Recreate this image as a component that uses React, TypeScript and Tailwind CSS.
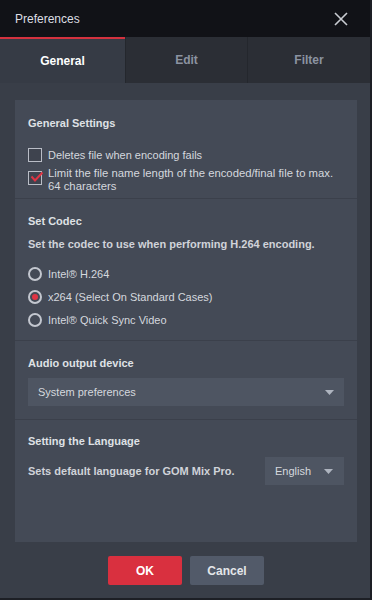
import React from "react";

const font = { fontFamily: '"Liberation Sans", Arial, sans-serif' };

function Checkbox({ checked }: { checked?: boolean }) {
  return (
    <span className="relative inline-block w-[14px] h-[14px] shrink-0 border border-[#b9bdc6] bg-[#3e434e]">
      {checked && (
        <svg className="absolute left-[1px] top-[-1px]" width="14" height="12" viewBox="0 0 14 12">
          <path d="M1.5 5.5 L5 9.5 L12.5 1.5" fill="none" stroke="#e03444" strokeWidth="2" />
        </svg>
      )}
    </span>
  );
}

function Radio({ checked }: { checked?: boolean }) {
  return (
    <span className="flex items-center justify-center w-[14px] h-[14px] shrink-0 rounded-full border-2 border-[#c3c7cf]">
      {checked && <span className="w-[6px] h-[6px] rounded-full bg-[#e03444]" />}
    </span>
  );
}

function Caret() {
  return (
    <svg width="9" height="5" viewBox="0 0 9 5">
      <path d="M0 0 H9 L4.5 5 Z" fill="#aeb4bf" />
    </svg>
  );
}

export default function App() {
  return (
    <div style={font} className="w-[372px] h-[600px] flex flex-col bg-[#393e48] text-[#d5d8de] text-[11px] border-r-2 border-b-2 border-[#1d1f25] overflow-hidden">
      <div className="h-[37px] shrink-0 flex items-center justify-between pl-[15px] pr-[22px] bg-[#111217]">
        <span className="text-[12px] text-[#dcdee3]">Preferences</span>
        <svg width="14" height="14" viewBox="0 0 14 14">
          <path d="M1 1 L13 13 M13 1 L1 13" stroke="#c9ccd2" strokeWidth="1.6" />
        </svg>
      </div>

      <div className="h-[46px] shrink-0 flex">
        <div className="w-[125px] flex items-center justify-center bg-[#363b45] border-t-2 border-[#d4323f] font-bold text-[12px] text-white">
          General
        </div>
        <div className="w-[122px] flex items-center justify-center bg-[#2b2e35] border-l border-[#24272d] font-bold text-[12px] text-[#8b93a1]">
          Edit
        </div>
        <div className="flex-1 flex items-center justify-center bg-[#2b2e35] border-l border-[#24272d] font-bold text-[12px] text-[#8b93a1]">
          Filter
        </div>
      </div>

      <div className="flex-1 flex flex-col pt-[17px] pl-[15px] pr-[13px]">
        <div className="h-[442px] flex flex-col bg-[#444a56]">
          <section className="h-[99px] px-[13px] pt-[15px] border-b border-[#3b404b]">
            <div className="font-bold text-[11px] text-[#dfe1e5] leading-[16px]">General Settings</div>
            <div className="mt-[17px] flex items-center gap-[6px] leading-[14px]">
              <Checkbox />
              <span>Deletes file when encoding fails</span>
            </div>
            <div className="mt-[5px] flex items-start gap-[6px] leading-[13px] text-[11.3px]">
              <span className="mt-[4px]"><Checkbox checked /></span>
              <span>Limit the file name length of the encoded/final file to max.<br />64 characters</span>
            </div>
          </section>

          <section className="h-[142px] px-[13px] pt-[14px] border-b border-[#3b404b]">
            <div className="font-bold text-[11px] text-[#dfe1e5] leading-[16px]">Set Codec</div>
            <div className="mt-[7px] font-bold text-[11px] text-[#d0d3d9] leading-[16px]">Set the codec to use when performing H.264 encoding.</div>
            <div className="mt-[14px] flex items-center gap-[6px] leading-[16px]">
              <Radio />
              <span>Intel® H.264</span>
            </div>
            <div className="mt-[7px] flex items-center gap-[6px] leading-[16px]">
              <Radio checked />
              <span>x264 (Select On Standard Cases)</span>
            </div>
            <div className="mt-[7px] flex items-center gap-[6px] leading-[16px]">
              <Radio />
              <span>Intel® Quick Sync Video</span>
            </div>
          </section>

          <section className="h-[79px] px-[13px] pt-[14px] border-b border-[#3b404b]">
            <div className="font-bold text-[11px] text-[#dfe1e5] leading-[16px]">Audio output device</div>
            <div className="mt-[7px] h-[28px] flex items-center justify-between pl-[10px] pr-[10px] bg-[#4e5562]">
              <span>System preferences</span>
              <Caret />
            </div>
          </section>

          <section className="flex-1 px-[13px] pt-[13px]">
            <div className="font-bold text-[11px] text-[#dfe1e5] leading-[16px]">Setting the Language</div>
            <div className="mt-[8px] flex items-center justify-between">
              <span className="font-bold text-[11px] text-[#d0d3d9]">Sets default language for GOM Mix Pro.</span>
              <div className="w-[79px] h-[28px] flex items-center justify-between pl-[10px] pr-[11px] bg-[#4e5562]">
                <span>English</span>
                <Caret />
              </div>
            </div>
          </section>
        </div>

        <div className="flex justify-center gap-[8px] mt-[14px]">
          <button className="w-[74px] h-[29px] rounded-[2px] bg-[#d9303f] text-white font-bold text-[12px]">OK</button>
          <button className="w-[74px] h-[29px] rounded-[2px] bg-[#525a69] text-[#e4e6ea] font-bold text-[12px]">Cancel</button>
        </div>
      </div>
    </div>
  );
}
